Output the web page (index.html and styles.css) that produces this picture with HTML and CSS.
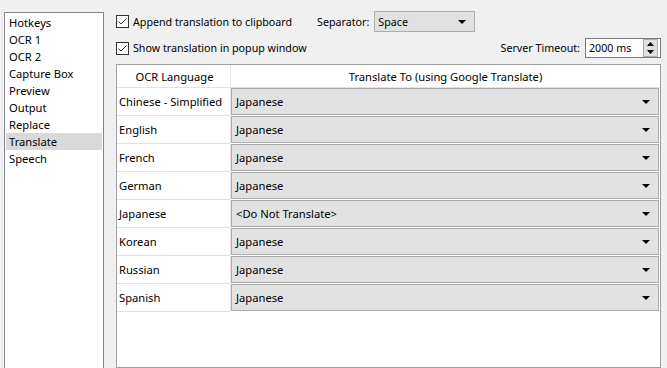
FILE: index.html
```html
<!DOCTYPE html>
<html lang="en">
<head>
    <meta charset="UTF-8">
    <title>Settings - Translate</title>
    <link rel="stylesheet" href="styles.css">
</head>
<body>
    <div class="app">
        <!-- left menu -->
        <ul class="nav">
            <li>Hotkeys</li>
            <li>OCR 1</li>
            <li>OCR 2</li>
            <li>Capture Box</li>
            <li>Preview</li>
            <li>Output</li>
            <li>Replace</li>
            <li class="selected">Translate</li>
            <li>Speech</li>
        </ul>

        <div class="main">
            <div class="row row-top">
                <label class="check">
                    <span class="box"><svg width="11" height="11" viewBox="0 0 11 11"><path d="M1.5 5.5 L4 8 L9.5 2.5" fill="none" stroke="#333" stroke-width="1"/></svg></span>
                    Append translation to clipboard
                </label>
                <span class="sep-label">Separator:</span>
                <div class="combo combo-sep">
                    <span>Space</span>
                    <span class="arrow"></span>
                </div>
            </div>

            <div class="row row-second">
                <label class="check">
                    <span class="box"><svg width="11" height="11" viewBox="0 0 11 11"><path d="M1.5 5.5 L4 8 L9.5 2.5" fill="none" stroke="#333" stroke-width="1"/></svg></span>
                    Show translation in popup window
                </label>
                <span class="timeout-label">Server Timeout:</span>
                <div class="numeric">
                    <span class="num-text">2000 ms</span>
                    <span class="spin">
                        <span class="spin-btn"><svg width="7" height="4" viewBox="0 0 7 4"><path d="M0 4 L3.5 0 L7 4 Z" fill="#000"/></svg></span>
                        <span class="spin-btn"><svg width="7" height="4" viewBox="0 0 7 4"><path d="M0 0 L3.5 4 L7 0 Z" fill="#000"/></svg></span>
                    </span>
                </div>
            </div>

            <div class="grid">
                <div class="grid-head">
                    <div class="col-lang">OCR Language</div>
                    <div class="col-to">Translate To (using Google Translate)</div>
                </div>
                <div class="grid-row">
                    <div class="col-lang">Chinese - Simplified</div>
                    <div class="col-to"><div class="cell-combo">Japanese<span class="arrow"></span></div></div>
                </div>
                <div class="grid-row">
                    <div class="col-lang">English</div>
                    <div class="col-to"><div class="cell-combo">Japanese<span class="arrow"></span></div></div>
                </div>
                <div class="grid-row">
                    <div class="col-lang">French</div>
                    <div class="col-to"><div class="cell-combo">Japanese<span class="arrow"></span></div></div>
                </div>
                <div class="grid-row">
                    <div class="col-lang">German</div>
                    <div class="col-to"><div class="cell-combo">Japanese<span class="arrow"></span></div></div>
                </div>
                <div class="grid-row">
                    <div class="col-lang">Japanese</div>
                    <div class="col-to"><div class="cell-combo">&lt;Do Not Translate&gt;<span class="arrow"></span></div></div>
                </div>
                <div class="grid-row">
                    <div class="col-lang">Korean</div>
                    <div class="col-to"><div class="cell-combo">Japanese<span class="arrow"></span></div></div>
                </div>
                <div class="grid-row">
                    <div class="col-lang">Russian</div>
                    <div class="col-to"><div class="cell-combo">Japanese<span class="arrow"></span></div></div>
                </div>
                <div class="grid-row">
                    <div class="col-lang">Spanish</div>
                    <div class="col-to"><div class="cell-combo">Japanese<span class="arrow"></span></div></div>
                </div>
            </div>
        </div>
    </div>
</body>
</html>
```

FILE: styles.css
```css
/* base */
body {
    margin: 0;
    background-color: #f0f0f0;
    font-family: "Noto Sans", "Liberation Sans", sans-serif;
    font-size: 11.2px;
    color: #000;
}

.app {
    display: flex;
    height: 368px;
    overflow: hidden;
}

/* left menu */
.nav {
    list-style: none;
    margin: 12px 0 0 4px;
    padding: 1px 0 0 0;
    width: 98px;
    height: 400px;
    border: 1px solid #828790;
    background-color: #fff;
    flex-shrink: 0;
}

.nav li {
    height: 17px;
    line-height: 17px;
    margin: 0 1px;
    padding-left: 3px;
    white-space: nowrap;
}

.nav .selected {
    background-color: #d9d9d9;
}

/* right side */
.main {
    margin-left: 12px;
    width: 545px;
    display: flex;
    flex-direction: column;
}

.row {
    display: flex;
    align-items: center;
    font-size: 10.7px;
}

.row-top {
    margin-top: 11px;
    height: 21px;
}

.row-second {
    margin-top: 6px;
    height: 20px;
}

.check {
    display: flex;
    align-items: center;
    gap: 4px;
    white-space: nowrap;
}

.box {
    width: 11px;
    height: 11px;
    border: 1px solid #333;
    background-color: #fff;
    display: flex;
}

.sep-label {
    margin-left: 25px;
}

.combo {
    display: flex;
    align-items: center;
    justify-content: space-between;
    box-sizing: border-box;
    height: 21px;
    border: 1px solid #adadad;
    background-color: #e1e1e1;
    padding: 0 8px 0 3px;
}

.combo-sep {
    width: 101px;
    margin-left: 5px;
}

.arrow {
    width: 0;
    height: 0;
    border-left: 4px solid transparent;
    border-right: 4px solid transparent;
    border-top: 4px solid #000;
}

.timeout-label {
    margin-left: auto;
}

.numeric {
    display: flex;
    align-items: center;
    box-sizing: border-box;
    width: 76px;
    height: 20px;
    margin-left: 5px;
    border: 1px solid #7a7a7a;
    background-color: #fff;
}

.num-text {
    flex: 1;
    padding-left: 3px;
}

.spin {
    display: flex;
    flex-direction: column;
    width: 13px;
    height: 16px;
    margin-right: 2px;
    border: 1px solid #adadad;
    background-color: #e1e1e1;
}

.spin-btn {
    flex: 1;
    display: flex;
    align-items: center;
    justify-content: center;
}

/* language table */
.grid {
    margin-top: 6px;
    height: 330px;
    border: 1px solid #a0a0a0;
    background-color: #fff;
    box-sizing: border-box;
}

.grid-head,
.grid-row {
    display: flex;
    height: 28px;
}

.grid-head {
    height: 23px;
}

.grid-head .col-lang,
.grid-head .col-to {
    justify-content: center;
}

.col-lang {
    width: 114px;
    flex-shrink: 0;
    display: flex;
    align-items: center;
    padding-left: 2px;
    box-sizing: border-box;
    border-right: 1px solid #e3e3e3;
    border-bottom: 1px solid #e3e3e3;
    white-space: nowrap;
}

.col-to {
    flex: 1;
    display: flex;
    align-items: center;
    border-bottom: 1px solid #e3e3e3;
}

.grid-row .col-to {
    border-bottom: none;
}

.cell-combo {
    flex: 1;
    align-self: stretch;
    display: flex;
    align-items: center;
    justify-content: space-between;
    margin: 0 1px 1px 0;
    padding: 0 8px 0 4px;
    border: 1px solid #acacac;
    background-color: #e2e2e2;
}
```
